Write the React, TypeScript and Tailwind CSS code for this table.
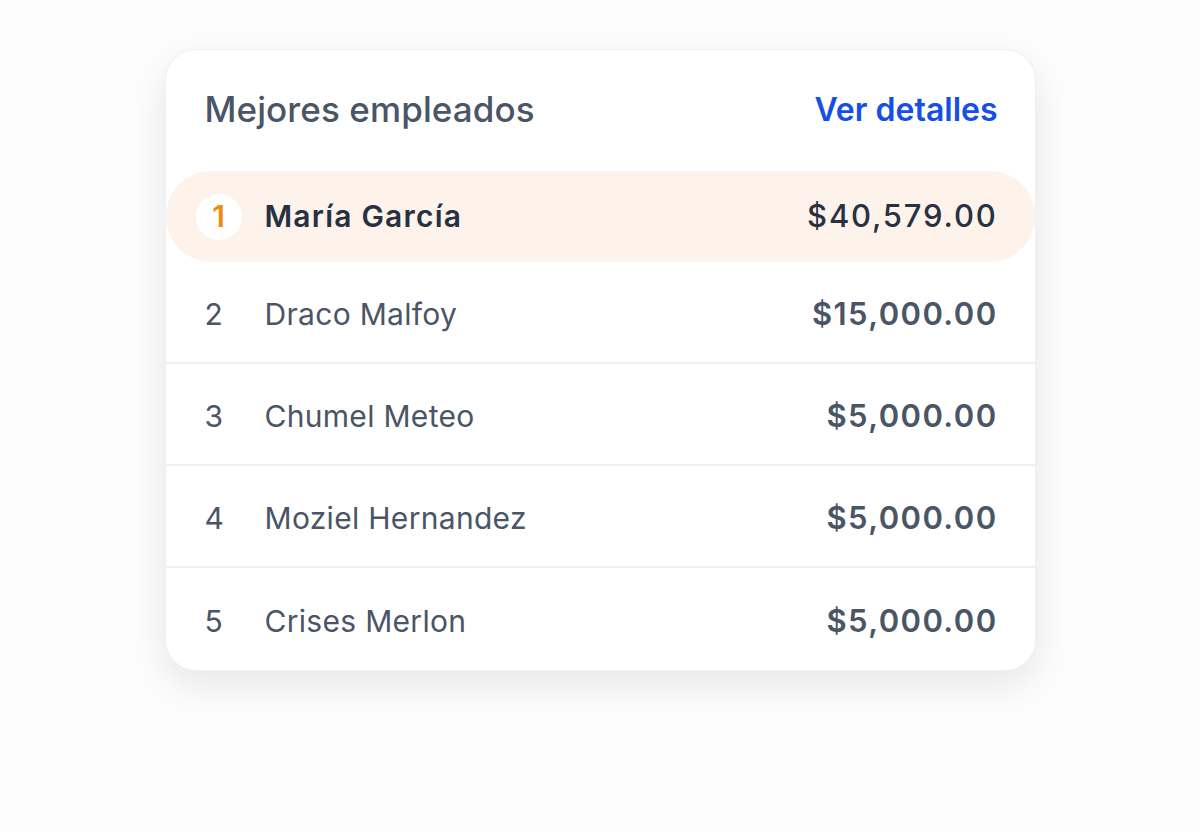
import React from 'react';

const rows = [
  { name: 'María García', amount: '$40,579.00' },
  { name: 'Draco Malfoy', amount: '$15,000.00' },
  { name: 'Chumel Meteo', amount: '$5,000.00' },
  { name: 'Moziel Hernandez', amount: '$5,000.00' },
  { name: 'Crises Merlon', amount: '$5,000.00' },
];

export default function App() {
  return (
    <div className="min-h-[832px] w-full bg-[#fdfdfd] pt-[50px]" style={{ fontFamily: 'Inter, "Noto Sans", sans-serif' }}>
      <div className="mx-auto w-[869px] overflow-hidden rounded-[30px] bg-white shadow-[0_14px_40px_rgba(15,23,42,0.10)] ring-1 ring-[#eef0f3]">
        <div className="flex h-[121px] items-center justify-between pl-[39px] pr-[37px] pb-[2px]">
          <h2 className="text-[35px] font-medium tracking-[0.1px] text-[#4a5566]">Mejores empleados</h2>
          <a href="#" className="text-[32px] font-semibold text-[#1450e6]">Ver detalles</a>
        </div>
        {rows.map((r, i) =>
          i === 0 ? (
            <div key={r.name} className="flex h-[91px] items-center rounded-full bg-[#fdf3ea] pl-[30px] pr-[37px]">
              <span className="flex h-[46px] w-[46px] items-center justify-center rounded-full bg-white text-[30px] font-semibold text-[#f08c0a]">1</span>
              <span className="ml-[23px] text-[30px] font-semibold tracking-[1.2px] text-[#273142]">{r.name}</span>
              <span className="ml-auto text-[31px] font-medium tracking-[1.8px] text-[#273142]">{r.amount}</span>
            </div>
          ) : (
            <div key={r.name} className={`flex h-[102px] items-center pl-[39px] pr-[37px] pt-[4px] ${i < rows.length - 1 ? 'border-b-2 border-[#eef0f2]' : ''}`}>
              <span className="w-[60px] text-[30px] text-[#4a5566]">{i + 1}</span>
              <span className="text-[30px] tracking-[0.3px] text-[#4a5566]">{r.name}</span>
              <span className="ml-auto text-[31px] font-semibold tracking-[1.4px] text-[#4a5566]">{r.amount}</span>
            </div>
          )
        )}
      </div>
    </div>
  );
}
